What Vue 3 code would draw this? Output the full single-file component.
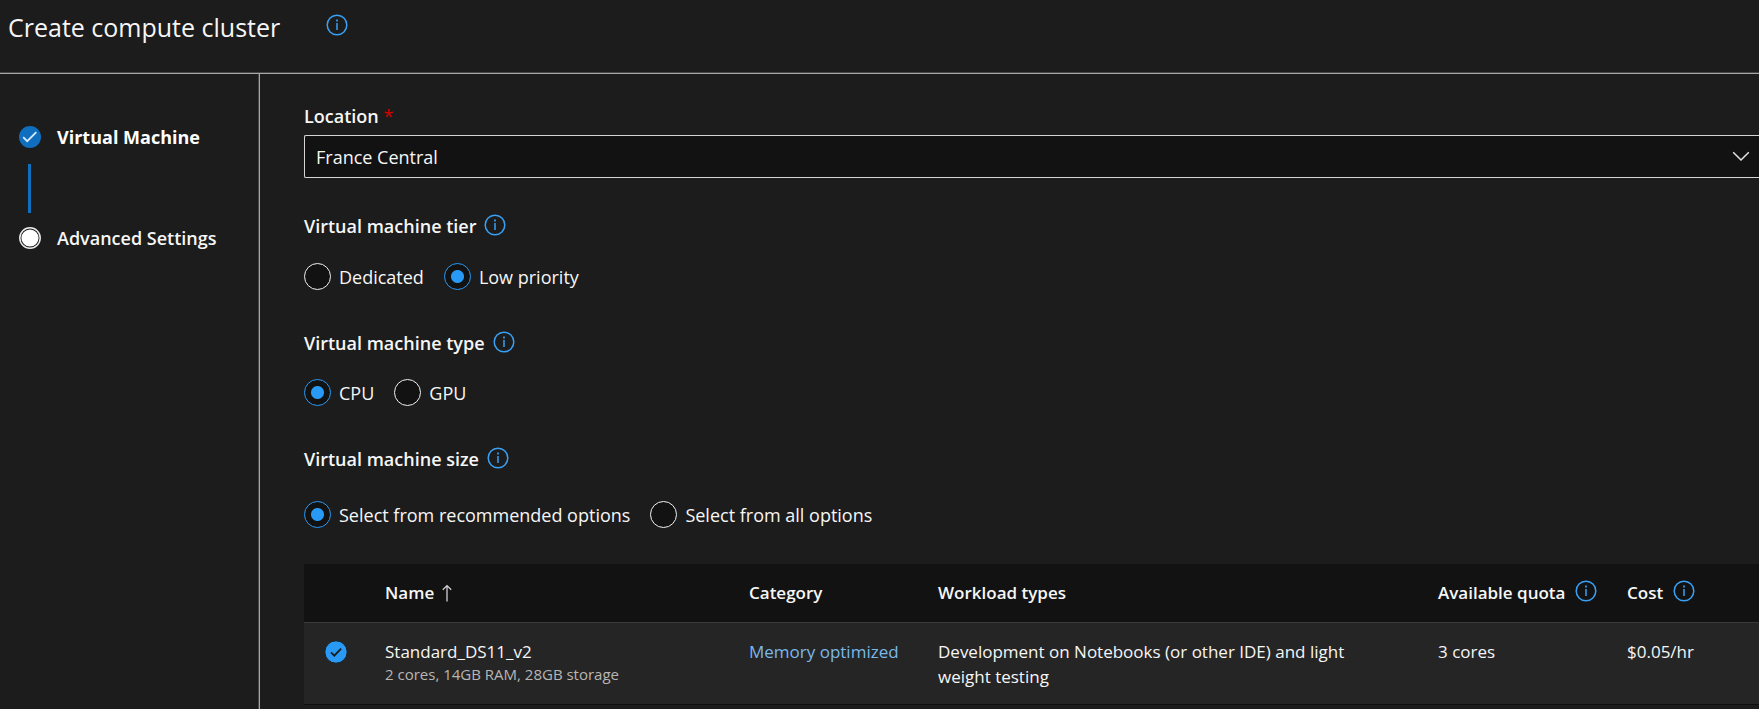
<script setup>
import { ref, h } from 'vue'

const InfoIcon = () =>
  h('svg', { width: 22, height: 22, viewBox: '0 0 22 22', fill: 'none', 'aria-hidden': 'true' }, [
    h('circle', { cx: 11, cy: 11, r: 9.8, stroke: '#3aa0f3', 'stroke-width': 1.5 }),
    h('path', { d: 'M11 9v7', stroke: '#3aa0f3', 'stroke-width': 1.5 }),
    h('path', { d: 'M11 5.6v1.8', stroke: '#3aa0f3', 'stroke-width': 1.7 })
  ])

const location = ref('France Central')
const groups = ref([
  { id: 'tier', label: 'Virtual machine tier', value: 'Low priority', options: ['Dedicated', 'Low priority'] },
  { id: 'type', label: 'Virtual machine type', value: 'CPU', options: ['CPU', 'GPU'] },
  {
    id: 'size',
    label: 'Virtual machine size',
    value: 'Select from recommended options',
    options: ['Select from recommended options', 'Select from all options']
  }
])
const rows = [
  {
    name: 'Standard_DS11_v2',
    specs: '2 cores, 14GB RAM, 28GB storage',
    category: 'Memory optimized',
    workload: 'Development on Notebooks (or other IDE) and light weight testing',
    quota: '3 cores',
    cost: '$0.05/hr'
  }
]
</script>

<template>
  <div class="page">
    <header class="header">
      <h1>Create compute cluster</h1>
      <button class="info" type="button" aria-label="About compute clusters"><InfoIcon /></button>
    </header>
    <div class="body">
      <nav class="steps" aria-label="Steps">
        <a class="step current" href="#vm" aria-current="step">
          <svg width="22" height="22" viewBox="0 0 22 22" fill="none" aria-hidden="true">
            <circle cx="11" cy="11" r="11" fill="#106ebe" />
            <path d="M4.2 11.2l4 4L17.3 6.2" stroke="#d8ecfc" stroke-width="1.8" />
          </svg>
          <span>Virtual Machine</span>
        </a>
        <div class="connector"></div>
        <a class="step" href="#advanced">
          <svg width="22" height="22" viewBox="0 0 22 22" fill="none" aria-hidden="true">
            <circle cx="11" cy="11" r="10.2" fill="#1b1b1b" stroke="#ececec" stroke-width="1.5" />
            <circle cx="11" cy="11" r="8.6" fill="#fff" />
          </svg>
          <span>Advanced Settings</span>
        </a>
      </nav>
      <main class="content">
        <label class="field-label" for="location">Location <span class="required">*</span></label>
        <div class="select-wrap">
          <select id="location" v-model="location">
            <option>France Central</option>
          </select>
          <svg class="chevron" width="18" height="12" viewBox="0 0 18 12" fill="none" aria-hidden="true">
            <path d="M1.2 1.2L9 9l7.800-7.800" stroke="#e4e4e4" stroke-width="1.5" />
          </svg>
        </div>

        <section v-for="g in groups" :key="g.id" :class="['group', g.id]" role="radiogroup" :aria-labelledby="g.id + '-label'">
          <div class="group-head">
            <span :id="g.id + '-label'" class="group-label">{{ g.label }}</span>
            <button class="info" type="button" :aria-label="'About ' + g.label"><InfoIcon /></button>
          </div>
          <div class="options">
            <label v-for="o in g.options" :key="o" class="option">
              <input v-model="g.value" type="radio" :name="g.id" :value="o" />
              <span>{{ o }}</span>
            </label>
          </div>
        </section>

        <table>
          <colgroup>
            <col class="c-check" /><col class="c-name" /><col class="c-mid" /><col /><col class="c-mid" /><col class="c-cost" />
          </colgroup>
          <thead>
            <tr>
              <td></td>
              <th scope="col">
                <button class="sort" type="button">
                  Name
                  <svg width="10" height="18" viewBox="0 0 10 18" fill="none" aria-hidden="true">
                    <path d="M5 17.500V2M.8 5.800L5 1.600l4.200 4.200" stroke="#d0d0d0" stroke-width="1.300" />
                  </svg>
                </button>
              </th>
              <th scope="col">Category</th>
              <th scope="col">Workload types</th>
              <th scope="col">
                <div class="th-info">Available quota<button class="info" type="button" aria-label="About available quota"><InfoIcon /></button></div>
              </th>
              <th scope="col">
                <div class="th-info">Cost<button class="info" type="button" aria-label="About cost"><InfoIcon /></button></div>
              </th>
            </tr>
          </thead>
          <tbody>
            <tr v-for="r in rows" :key="r.name">
              <td class="check">
                <svg width="24" height="24" viewBox="0 0 24 24" fill="none" role="img" aria-label="Selected">
                  <circle cx="12" cy="12" r="11.200" fill="#2899f5" stroke="#1b1b1b" stroke-width="1" />
                  <path d="M7 12.300l3.300 3.300 6.800-6.900" stroke="#1b1b1b" stroke-width="1.800" />
                </svg>
              </td>
              <td>
                <div>{{ r.name }}</div>
                <div class="specs">{{ r.specs }}</div>
              </td>
              <td><a class="category" href="#memory">{{ r.category }}</a></td>
              <td class="workload">{{ r.workload }}</td>
              <td>{{ r.quota }}</td>
              <td>{{ r.cost }}</td>
            </tr>
          </tbody>
        </table>
      </main>
    </div>
  </div>
</template>

<style>
body {
  background: #1b1b1b;
}
</style>

<style scoped>
.page {
  box-sizing: border-box;
  min-height: 100vh;
  display: flex;
  flex-direction: column;
  background: #1c1c1c;
  color: #f6f6f6;
  font-family: 'Open Sans', 'Noto Sans', sans-serif;
  font-size: 18px;
  line-height: 24px;
}
button {
  padding: 0;
  border: 0;
  background: none;
  color: inherit;
  font: inherit;
}
svg {
  display: block;
}
.header {
  display: flex;
  align-items: flex-start;
  gap: 46px;
  box-sizing: border-box;
  height: 74px;
  padding: 10px 8px 0;
  border-bottom: 1px solid #a8a6a4;
  box-shadow: inset 0 -1px #484848;
}
h1 {
  margin: 0;
  font-size: 25px;
  line-height: 34px;
  font-weight: 400;
}
.header .info {
  margin-top: 4px;
}
.body {
  flex: 1;
  display: flex;
}
.steps {
  flex: none;
  box-sizing: border-box;
  width: 260px;
  padding: 51px 19px 0;
  border-right: 1px solid #a8a6a4;
  box-shadow: inset -1px 0 #484848;
}
.step {
  display: flex;
  align-items: center;
  gap: 16px;
  color: inherit;
  text-decoration: none;
  font-weight: 600;
}
.step.current {
  font-weight: 700;
  color: #fff;
}
.connector {
  width: 3px;
  height: 49px;
  margin: 15px 9px 13px;
  background: #106ebe;
}
.content {
  flex: 1;
  min-width: 0;
  padding-left: 44px;
  padding-top: 30px;
}
.field-label {
  display: block;
  margin-bottom: 7px;
  font-weight: 600;
}
.required {
  color: #d80000;
  font-weight: 400;
}
.select-wrap {
  display: grid;
  align-items: center;
}
select {
  grid-area: 1 / 1;
  appearance: none;
  width: 100%;
  height: 43px;
  padding: 0 40px 0 11px;
  border: 1px solid #d6d5d4;
  border-right: 0;
  border-radius: 2px 0 0 2px;
  background: #121212;
  color: #f6f6f6;
  font: inherit;
}
.chevron {
  grid-area: 1 / 1;
  justify-self: end;
  margin-right: 9px;
  pointer-events: none;
}
.group {
  margin-top: 36px;
}
.group + .group {
  margin-top: 41px;
}
.group-head {
  display: flex;
  align-items: flex-start;
  gap: 8px;
  height: 26px;
}
.options {
  display: flex;
  gap: 20px;
  margin-top: 22px;
}
.size .options {
  margin-top: 28px;
}
.tier .options {
  margin-top: 23px;
}
.group-label {
  font-weight: 600;
}
.option {
  display: flex;
  align-items: center;
  gap: 8px;
}
input {
  appearance: none;
  box-sizing: border-box;
  width: 27px;
  height: 27px;
  margin: 0;
  border: 1px solid #f3f2f1;
  border-radius: 50%;
  background: #121212;
}
input:checked {
  border-color: #2899f5;
  background: radial-gradient(circle, #2899f5 0 6px, #121212 7px);
}
table {
  width: 100%;
  margin-top: 36px;
  border-collapse: collapse;
  table-layout: fixed;
  font-size: 17px;
  line-height: 25px;
}
.c-check {
  width: 81px;
}
.c-name {
  width: 364px;
}
.c-mid {
  width: 189px;
}
.c-cost {
  width: 132px;
}
th,
td {
  padding: 0;
  text-align: left;
  vertical-align: top;
}
thead tr {
  height: 58px;
  background: #121212;
}
th {
  vertical-align: middle;
  font-weight: 600;
}
tbody tr {
  height: 82px;
  background: #252525;
  border-top: 1px solid #3a3a3a;
  border-bottom: 1px solid #101010;
}
tbody td {
  padding-top: 16px;
}
tbody td.check {
  padding: 17px 0 0 20px;
}
td.workload {
  padding-right: 50px;
}
.sort,
.th-info {
  display: flex;
  align-items: center;
  gap: 8px;
}
.th-info {
  align-items: flex-start;
  gap: 10px;
}
.specs {
  color: #b8b6b4;
  font-size: 15px;
  line-height: 20px;
}
.category {
  color: #7ab8eb;
  text-decoration: none;
}
</style>
